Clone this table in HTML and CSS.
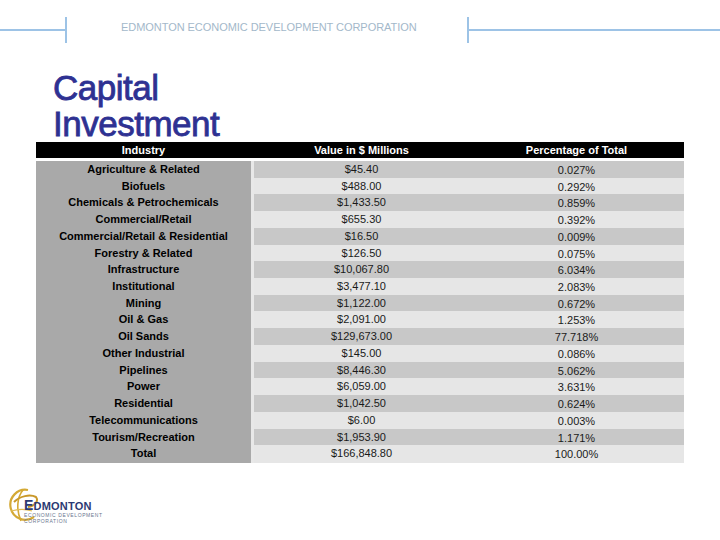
FILE: index.html
```html
<!DOCTYPE html>
<html>
<head>
<meta charset="utf-8">
<link rel="stylesheet" href="styles.css">
</head>
<body>
<header class="topbar">
  <div class="line line-left"></div>
  <div class="tick"></div>
  <div class="org">EDMONTON ECONOMIC DEVELOPMENT CORPORATION</div>
  <div class="tick"></div>
  <div class="line line-right"></div>
</header>

<h1 class="title">Capital<br>Investment</h1>

<div class="table">
  <div class="thead">
    <div class="th">Industry</div>
    <div class="th-gap"></div>
    <div class="th">Value in $ Millions</div>
    <div class="th">Percentage of Total</div>
  </div>
  <div class="tbody">
    <div class="row dark"><div class="ind">Agriculture &amp; Related</div><div class="sep"></div><div class="val">$45.40</div><div class="pct">0.027%</div></div>
    <div class="row light"><div class="ind">Biofuels</div><div class="sep"></div><div class="val">$488.00</div><div class="pct">0.292%</div></div>
    <div class="row dark"><div class="ind">Chemicals &amp; Petrochemicals</div><div class="sep"></div><div class="val">$1,433.50</div><div class="pct">0.859%</div></div>
    <div class="row light"><div class="ind">Commercial/Retail</div><div class="sep"></div><div class="val">$655.30</div><div class="pct">0.392%</div></div>
    <div class="row dark"><div class="ind">Commercial/Retail &amp; Residential</div><div class="sep"></div><div class="val">$16.50</div><div class="pct">0.009%</div></div>
    <div class="row light"><div class="ind">Forestry &amp; Related</div><div class="sep"></div><div class="val">$126.50</div><div class="pct">0.075%</div></div>
    <div class="row dark"><div class="ind">Infrastructure</div><div class="sep"></div><div class="val">$10,067.80</div><div class="pct">6.034%</div></div>
    <div class="row light"><div class="ind">Institutional</div><div class="sep"></div><div class="val">$3,477.10</div><div class="pct">2.083%</div></div>
    <div class="row dark"><div class="ind">Mining</div><div class="sep"></div><div class="val">$1,122.00</div><div class="pct">0.672%</div></div>
    <div class="row light"><div class="ind">Oil &amp; Gas</div><div class="sep"></div><div class="val">$2,091.00</div><div class="pct">1.253%</div></div>
    <div class="row dark"><div class="ind">Oil Sands</div><div class="sep"></div><div class="val">$129,673.00</div><div class="pct">77.718%</div></div>
    <div class="row light"><div class="ind">Other Industrial</div><div class="sep"></div><div class="val">$145.00</div><div class="pct">0.086%</div></div>
    <div class="row dark"><div class="ind">Pipelines</div><div class="sep"></div><div class="val">$8,446.30</div><div class="pct">5.062%</div></div>
    <div class="row light"><div class="ind">Power</div><div class="sep"></div><div class="val">$6,059.00</div><div class="pct">3.631%</div></div>
    <div class="row dark"><div class="ind">Residential</div><div class="sep"></div><div class="val">$1,042.50</div><div class="pct">0.624%</div></div>
    <div class="row light"><div class="ind">Telecommunications</div><div class="sep"></div><div class="val">$6.00</div><div class="pct">0.003%</div></div>
    <div class="row dark"><div class="ind">Tourism/Recreation</div><div class="sep"></div><div class="val">$1,953.90</div><div class="pct">1.171%</div></div>
    <div class="row light"><div class="ind">Total</div><div class="sep"></div><div class="val">$166,848.80</div><div class="pct">100.00%</div></div>
  </div>
</div>

<footer class="logo">
  <svg class="globe" width="30" height="36" viewBox="0 0 30 36">
    <path d="M19 3 A15 15 0 1 0 25 30" fill="none" stroke="#d4a935" stroke-width="2.2"/>
    <path d="M14 3 C8 10 7 23 12 34" fill="none" stroke="#d4a935" stroke-width="1.6"/>
    <path d="M5 15 C11 9 21 7 27 10 C30 14 26 19 19 20" fill="none" stroke="#c9982a" stroke-width="2"/>
    <path d="M2 24 C9 22 17 22 23 24" fill="none" stroke="#e0bb55" stroke-width="1.2"/>
  </svg>
  <div class="logo-text">
    <div class="brand"><span class="big-e">E</span>DMONTON</div>
    <div class="sub">ECONOMIC DEVELOPMENT</div>
    <div class="sub">CORPORATION</div>
  </div>
</footer>
</body>
</html>
```

FILE: styles.css
```css
* { box-sizing: border-box; }
body {
  margin: 0;
  width: 720px;
  height: 540px;
  background: #ffffff;
  font-family: "Liberation Sans", Arial, sans-serif;
  overflow: hidden;
}

.topbar {
  display: flex;
  align-items: center;
  height: 60px;
}
.line {
  height: 2px;
  background: #9dc3e6;
}
.line-left { width: 65px; }
.line-right { flex: 1; }
.tick {
  width: 2px;
  height: 26px;
  background: #9dc3e6;
}
.org {
  width: 400px;
  padding-left: 54px;
  padding-bottom: 6px;
  font-size: 11px;
  color: #a3b8ca;
  letter-spacing: -0.05px;
  white-space: nowrap;
}

.title {
  margin: 10px 0 0 53px;
  height: 72px;
  font-size: 35px;
  line-height: 36px;
  font-weight: normal;
  letter-spacing: -0.5px;
  color: #2e3192;
  -webkit-text-stroke: 0.8px #2e3192;
}

.table {
  margin-left: 36px;
  width: 648px;
  font-size: 11px;
}
.thead {
  display: grid;
  grid-template-columns: 215px 3px 215px 215px;
  height: 16px;
  background: #000;
  color: #fff;
  font-weight: bold;
  line-height: 16px;
  text-align: center;
}
.tbody {
  margin-top: 3px;
}
.row {
  display: grid;
  grid-template-columns: 215px 3px 215px 215px;
  height: 16.72px;
  line-height: 16.72px;
  text-align: center;
}
.ind {
  background: #a9a9a9;
  color: #000;
  font-weight: bold;
  white-space: nowrap;
}
.sep { background: #e8e8e8; }
.val, .pct { color: #1a1a1a; }
.pct { padding-top: 1px; }
.dark .val, .dark .pct { background: #c8c8c8; }
.light .val, .light .pct { background: #e6e6e6; }

.logo {
  position: relative;
  margin: 24px 0 0 6px;
  width: 100px;
  height: 40px;
}
.globe {
  position: absolute;
  left: 3px;
  top: 1px;
}
.logo-text {
  position: absolute;
  left: 18px;
  top: 14px;
  color: #2b3a73;
}
.brand {
  font-weight: bold;
  font-size: 11px;
  line-height: 12px;
  height: 12px;
  letter-spacing: 0.2px;
}
.big-e { font-size: 14px; line-height: 10px; }
.sub {
  font-size: 5px;
  line-height: 6px;
  color: #6b7790;
  letter-spacing: 0.6px;
  white-space: nowrap;
}
```
